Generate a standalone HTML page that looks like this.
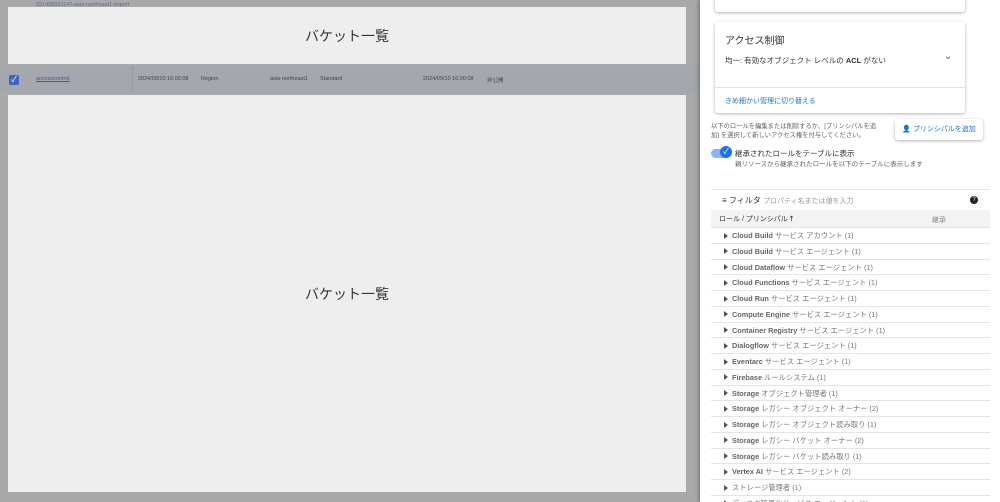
<!DOCTYPE html>
<html style="width:1000px;height:502px;overflow:hidden"><head><meta charset="utf-8"><style>
*{box-sizing:border-box;margin:0;padding:0}
body{width:1000px;height:502px;overflow:hidden;background:#a9a9a9;font-family:"Liberation Sans","Noto Sans CJK JP",sans-serif;position:relative}
.a{position:absolute}
.box{background:#eeeeee;display:flex;align-items:center;justify-content:center;font-size:14px;color:#333}
.right{left:700px;top:0;width:300px;height:502px;background:#fff;box-shadow:-2px 0 3px rgba(0,0,0,.25);overflow:hidden}
.card{background:#fff;box-shadow:0 1px 3px rgba(0,0,0,.3);border-radius:3px}
.t{font-size:7px;color:#5f6368;white-space:nowrap}
.s{font-size:5.5px;color:#444;white-space:nowrap}
.row{position:absolute;left:11px;width:279px;height:15.75px;border-bottom:1px solid #e4e4e4;font-size:7.3px;color:#777;line-height:15px;padding-left:21px;white-space:nowrap}
.row b{color:#666;font-weight:bold}
.row:before{content:"";position:absolute;left:13px;top:4.5px;border-left:4px solid #555;border-top:3px solid transparent;border-bottom:3px solid transparent}
</style></head><body>
<div class="a" style="left:0;top:66px;width:700px;height:27px;background:#a4a7ad"></div>
<div class="a s" style="left:36px;top:2px;color:#5a6a9a">021406001147-asia-northeast1-import</div>
<div class="a" style="left:9px;top:75px;width:10px;height:10px;background:#3c66c4;border-radius:2px;color:#fff;font-size:8px;line-height:10px;text-align:center">✓</div>
<div class="a s" style="left:36px;top:76px;color:#7040a0;text-decoration:underline">accesscontrol</div>
<div class="a s" style="left:138px;top:76px">2024/09/10 16:00:08</div>
<div class="a s" style="left:201px;top:76px">Region</div>
<div class="a s" style="left:270px;top:76px">asia-northeast1</div>
<div class="a s" style="left:320px;top:76px">Standard</div>
<div class="a s" style="left:423px;top:76px">2024/09/10 16:00:08</div>
<div class="a s" style="left:487px;top:76px">非公開</div>
<div class="a" style="left:132px;top:66px;width:1px;height:27px;background:#999"></div>
<div class="a box" style="left:8px;top:7px;width:678px;height:57px">バケット一覧</div>
<div class="a box" style="left:8px;top:95px;width:678px;height:397px">バケット一覧</div>
<div class="a right">
 <div class="a card" style="left:15px;top:-5px;width:250px;height:17px"></div>
 <div class="a card" style="left:15px;top:22px;width:250px;height:91px">
  <div class="a" style="left:10px;top:10px;font-size:10px;color:#333">アクセス制御</div>
  <div class="a" style="left:10px;top:33px;font-size:7.5px;color:#333">均一: 有効なオブジェクト レベルの <b>ACL</b> がない</div>
  <div class="a" style="left:229px;top:29px;font-size:10px;color:#555">⌄</div>
  <div class="a" style="left:0;top:65px;width:250px;height:1px;background:#e4e4e4"></div>
  <div class="a" style="left:10px;top:74px;font-size:7px;color:#1a73e8">きめ細かい管理に切り替える</div>
 </div>
 <div class="a" style="left:11px;top:122px;line-height:9px;font-size:6.3px;color:#5f6368;white-space:nowrap">以下のロールを編集または削除するか、[プリンシパルを追<br>加] を選択して新しいアクセス権を付与してください。</div>
 <div class="a card" style="left:195px;top:119px;width:88px;height:21px;font-size:7px;color:#1a73e8;line-height:21px;text-align:center">👤 プリンシパルを追加</div>
 <div class="a" style="left:11px;top:149px;width:18px;height:9px;background:#8ab4f8;border-radius:5px"></div>
 <div class="a" style="left:20px;top:146px;width:12px;height:12px;background:#1a73e8;border-radius:50%;color:#fff;font-size:8px;line-height:12px;text-align:center">✓</div>
 <div class="a" style="left:35px;top:148px;font-size:7.5px;color:#333">継承されたロールをテーブルに表示</div>
 <div class="a" style="left:35px;top:158px;font-size:6.5px;color:#5f6368;white-space:nowrap">親リソースから継承されたロールを以下のテーブルに表示します</div>
 <div class="a" style="left:11px;top:189px;width:279px;height:1px;background:#e4e4e4"></div>
 <div class="a" style="left:22px;top:195px;font-size:8px;color:#333">≡ フィルタ <span style="color:#999;font-size:7px">プロパティ名または値を入力</span></div>
 <div class="a" style="left:270px;top:196px;width:8px;height:8px;background:#222;border-radius:50%;color:#fff;font-size:6px;line-height:8px;text-align:center">?</div>
 <div class="a" style="left:11px;top:210px;width:279px;height:18px;background:#f3f3f3;border-bottom:1px solid #e4e4e4"></div>
 <div class="a" style="left:19px;top:214px;font-size:7px;color:#333">ロール / プリンシパル <b>🡑</b></div>
 <div class="a t" style="left:232px;top:215px;color:#888">継承</div>
 <div class="row" style="top:228px"><b>Cloud Build</b> サービス アカウント (1)</div>
 <div class="row" style="top:243.75px"><b>Cloud Build</b> サービス エージェント (1)</div>
 <div class="row" style="top:259.5px"><b>Cloud Dataflow</b> サービス エージェント (1)</div>
 <div class="row" style="top:275.25px"><b>Cloud Functions</b> サービス エージェント (1)</div>
 <div class="row" style="top:291px"><b>Cloud Run</b> サービス エージェント (1)</div>
 <div class="row" style="top:306.75px"><b>Compute Engine</b> サービス エージェント (1)</div>
 <div class="row" style="top:322.5px"><b>Container Registry</b> サービス エージェント (1)</div>
 <div class="row" style="top:338.25px"><b>Dialogflow</b> サービス エージェント (1)</div>
 <div class="row" style="top:354px"><b>Eventarc</b> サービス エージェント (1)</div>
 <div class="row" style="top:369.75px"><b>Firebase</b> ルールシステム (1)</div>
 <div class="row" style="top:385.5px"><b>Storage</b> オブジェクト管理者 (1)</div>
 <div class="row" style="top:401.25px"><b>Storage</b> レガシー オブジェクト オーナー (2)</div>
 <div class="row" style="top:417px"><b>Storage</b> レガシー オブジェクト読み取り (1)</div>
 <div class="row" style="top:432.75px"><b>Storage</b> レガシー バケット オーナー (2)</div>
 <div class="row" style="top:448.5px"><b>Storage</b> レガシー バケット読み取り (1)</div>
 <div class="row" style="top:464.25px"><b>Vertex AI</b> サービス エージェント (2)</div>
 <div class="row" style="top:480px">ストレージ管理者 (1)</div>
 <div class="row" style="top:495.75px">ディスク暗号化サービス エージェント (1)</div>
</div>
</body></html>
